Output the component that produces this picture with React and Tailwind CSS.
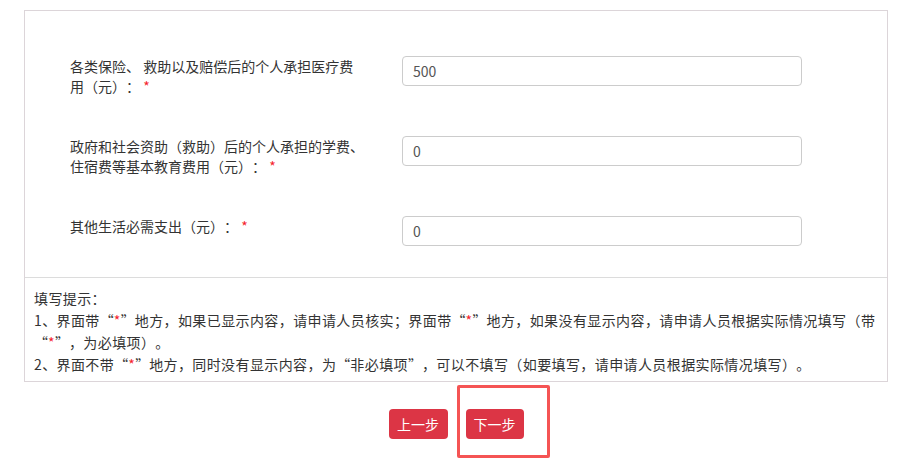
const font = { fontFamily: '"Noto Sans CJK SC", "Noto Sans", sans-serif' }

const rows = [
  { label: ['各类保险、 救助以及赔偿后的个人承担医疗费', '用（元）：'], value: '500' },
  { label: ['政府和社会资助（救助）后的个人承担的学费、', '住宿费等基本教育费用（元）：'], value: '0' },
  { label: ['其他生活必需支出（元）：'], value: '0' },
]

const Star = () => <span className="text-[#f5222d]">*</span>

// full-width curly quotes, as the original font draws them
const Quoted = ({ children }) => (
  <>
    <span className="inline-block w-[14px] text-right">“</span>
    {children}
    <span className="inline-block w-[14px] text-left">”</span>
  </>
)

const FieldRow = ({ row }) => (
  <div className="flex items-start">
    <div className="w-[377px] pl-[45px] text-[14px] leading-[20px] text-[#333]">
      {row.label.map((line, i) => (
        <div key={i} className="whitespace-nowrap">
          {line}
          {i === row.label.length - 1 && <> <Star /></>}
        </div>
      ))}
    </div>
    <input
      readOnly
      value={row.value}
      className="w-[400px] h-[30px] px-[10px] border border-[#ccc] rounded-[4px] text-[14px] text-[#555] outline-none"
      style={font}
    />
  </div>
)

export default function App() {
  return (
    <div lang="zh-CN" className="w-[905px] h-[466px] bg-white text-[#333] [text-spacing-trim:space-all]" style={font}>
      <div className="pt-[10px] pl-[24px] w-[888px]">
        {/* Form box */}
        <div className="border border-[#dcd5d9]">
          <div className="flex flex-col gap-[40px] pt-[45px] pb-[31px]">
            {rows.map((row, i) => (
              <FieldRow key={i} row={row} />
            ))}
          </div>

          {/* Hints */}
          <div className="border-t border-[#dcdcdc] px-[9px] pt-[9px] pb-[6px] text-[14px] leading-[22px] tracking-[0.4px]">
            <div>填写提示：</div>
            <div>
              1、界面带<Quoted><Star /></Quoted>地方，如果已显示内容，请申请人员核实；界面带<Quoted><Star /></Quoted>地方，如果没有显示内容，请申请人员根据实际情况填写（带
              <br />
              <Quoted><Star /></Quoted>，为必填项）。
            </div>
            <div>
              2、界面不带<Quoted><Star /></Quoted>地方，同时没有显示内容，为<Quoted>非必填项</Quoted>，可以不填写（如要填写，请申请人员根据实际情况填写）。
            </div>
          </div>
        </div>

        {/* Buttons */}
        <div className="flex justify-center gap-[18px] pt-[27px]">
          <button className="w-[59px] h-[30px] rounded-[4px] bg-[#dc3545] text-white text-[14px]">
            上一步
          </button>
          <div className="relative">
            <div className="absolute left-[-9px] top-[-24px] w-[93px] h-[73px] border-[3px] border-[#f55454] rounded-[2px]" />
            <button className="w-[58px] h-[30px] rounded-[4px] bg-[#dc3545] text-white text-[14px]">
              下一步
            </button>
          </div>
        </div>
      </div>
    </div>
  )
}
